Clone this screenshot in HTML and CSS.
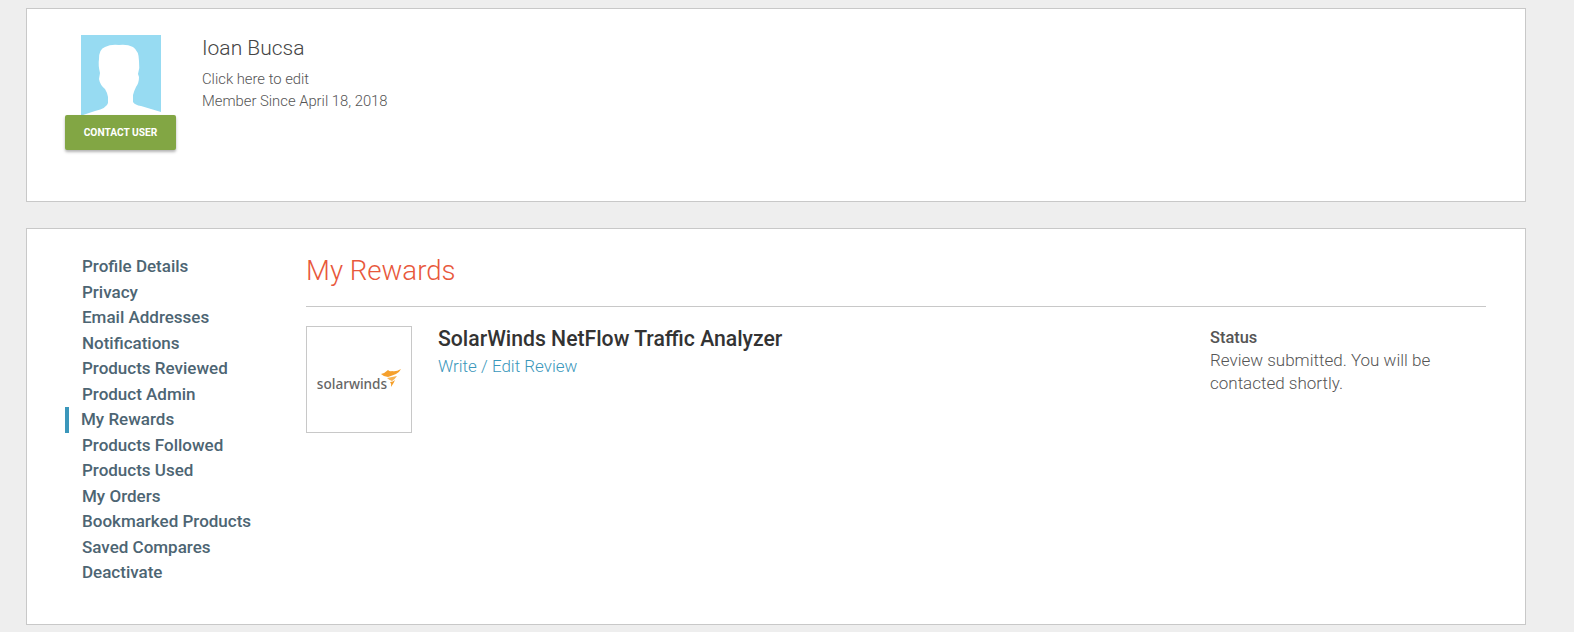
FILE: index.html
```html
<!DOCTYPE html>
<html lang="en">
<head>
    <meta charset="UTF-8">
    <title>My Rewards</title>
    <link rel="stylesheet" href="styles.css">
</head>

<body>
    <div class="card profile">
        <div class="avatar-box">
            <svg class="avatar" viewBox="0 0 80 80" width="80" height="80">
                <rect width="80" height="80" fill="#97dbf2"/>
                <path fill="#fff" d="M2 80 L14 76 Q26 73 27 68 L27 62 Q26 57 24 54 Q19 50 18 44 L19 38 Q17 30 18 24 Q18 14 24 12 Q30 9 38 10 Q46 9 52 12 Q58 16 58 26 Q59 33 57 39 L58 42 Q58 48 55 52 Q53 56 52 60 L52 67 Q54 70 60 71 L80 77 L80 80 Z"/>
            </svg>
            <a class="contact-btn" href="#">CONTACT USER</a>
        </div>
        <div class="profile-info">
            <h1>Ioan Bucsa</h1>
            <p>Click here to edit</p>
            <p>Member Since April 18, 2018</p>
        </div>
    </div>

    <div class="card rewards">
        <nav class="side-nav">
            <a href="#">Profile Details</a>
            <a href="#">Privacy</a>
            <a href="#">Email Addresses</a>
            <a href="#">Notifications</a>
            <a href="#">Products Reviewed</a>
            <a href="#">Product Admin</a>
            <a href="#" class="active">My Rewards</a>
            <a href="#">Products Followed</a>
            <a href="#">Products Used</a>
            <a href="#">My Orders</a>
            <a href="#">Bookmarked Products</a>
            <a href="#">Saved Compares</a>
            <a href="#">Deactivate</a>
        </nav>

        <div class="main">
            <h2>My Rewards</h2>
            <div class="reward-row">
                <div class="thumb">
                    <span class="logo-text">solarwinds</span>
                    <svg class="logo-flame" viewBox="0 0 20 18" width="20" height="18">
                        <path fill="#f5a02c" d="M0 5 Q4 4 7 1 Q9 3 11 2 Q15 3 20 0 Q18 4 15 5 Q10 7 7 8 Q3 8 0 5 Z"/>
                        <path fill="#f7b352" d="M6 9 Q11 8 16 7 Q14 10 11 12 Q8 11 6 9 Z"/>
                        <path fill="#f5a02c" d="M9 13 Q12 13 14 11 Q13 14 10 18 Q11 15 9 13 Z"/>
                    </svg>
                </div>
                <div class="reward-title">
                    <h3>SolarWinds NetFlow Traffic Analyzer</h3>
                    <a href="#">Write / Edit Review</a>
                </div>
                <div class="reward-status">
                    <strong>Status</strong>
                    <p>Review submitted. You will be contacted shortly.</p>
                </div>
            </div>
        </div>
    </div>
</body>
</html>
```

FILE: styles.css
```css
body {
    font-family: 'Roboto', sans-serif;
    margin: 0;
    padding: 8px 48px 0 26px;
    background-color: #eeeeee;
    color: #555;
}

.card {
    background-color: #fff;
    border: 1px solid #c8c8c8;
    box-sizing: border-box;
}

.profile {
    height: 194px;
    display: flex;
    padding: 26px 0 0 38px;
    margin-bottom: 26px;
}

.avatar-box {
    width: 111px;
    display: flex;
    flex-direction: column;
    align-items: center;
}

.avatar {
    display: block;
}

.contact-btn {
    width: 100%;
    height: 35px;
    line-height: 35px;
    text-align: center;
    background-color: #82a644;
    color: #fff;
    font-size: 10.2px;
    font-weight: 700;
    text-decoration: none;
    border-radius: 2px;
    box-shadow: 0px 2px 3px rgba(0, 0, 0, 0.3);
}

.profile-info {
    margin-left: 26px;
}

.profile-info h1 {
    font-size: 21px;
    font-weight: 300;
    line-height: 26px;
    color: #444;
    margin: 0 0 7px;
}

.profile-info p {
    font-size: 14.8px;
    font-weight: 300;
    line-height: 22px;
    color: #555;
    margin: 0;
}

.rewards {
    height: 397px;
    display: flex;
    padding: 25px 39px 0 38px;
}

.side-nav {
    width: 240px;
    flex-shrink: 0;
    display: flex;
    flex-direction: column;
}

.side-nav a {
    height: 25.5px;
    line-height: 25.5px;
    padding-left: 17px;
    font-size: 17px;
    font-weight: 500;
    color: #4d6573;
    text-decoration: none;
}

.side-nav a.active {
    border-left: 4px solid #3b97bb;
    padding-left: 12px;
}

.main {
    flex: 1;
    margin: -1px 0 0 1px;
}

.main h2 {
    font-size: 27.6px;
    font-weight: 300;
    line-height: 36px;
    color: #e8583c;
    margin: 0;
    padding-bottom: 17px;
    border-bottom: 1px solid #c8c8c8;
}

.reward-row {
    display: flex;
    margin-top: 19px;
}

.thumb {
    width: 106px;
    height: 107px;
    box-sizing: border-box;
    border: 1px solid #c8c8c8;
    display: flex;
    align-items: center;
    justify-content: center;
    flex-shrink: 0;
}

.logo-text {
    font-family: 'Noto Sans', sans-serif;
    font-size: 13.6px;
    font-weight: 500;
    color: #666;
    margin-top: 7px;
}

.logo-flame {
    margin: -3px 0 0 -6px;
}

.reward-title {
    flex: 1;
    margin-left: 26px;
}

.reward-title h3 {
    font-size: 21.2px;
    font-weight: 500;
    line-height: 26px;
    color: #333;
    margin: 0 0 2px;
}

.reward-title a {
    font-size: 17px;
    font-weight: 300;
    line-height: 24px;
    color: #3b97bb;
    text-decoration: none;
}

.reward-status {
    width: 276px;
    font-size: 17px;
    line-height: 23px;
}

.reward-status strong {
    font-weight: 500;
    font-size: 16.4px;
}

.reward-status p {
    font-weight: 300;
    margin: 0;
}
```
